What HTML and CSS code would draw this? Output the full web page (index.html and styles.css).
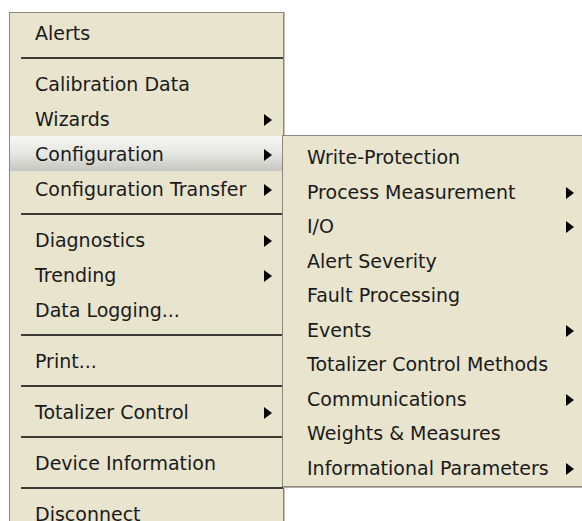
FILE: index.html
```html
<!DOCTYPE html>
<html lang="en">
<head>
  <meta charset="UTF-8" />
  <title>Device Menu</title>
  <link rel="stylesheet" href="styles.css">
</head>
<body>
  <div class="menu main-menu">
    <div class="item">Alerts</div>
    <div class="sep"></div>
    <div class="item">Calibration Data</div>
    <div class="item">Wizards<span class="arrow"></span></div>
    <div class="item active">Configuration<span class="arrow"></span></div>
    <div class="item">Configuration Transfer<span class="arrow"></span></div>
    <div class="sep"></div>
    <div class="item">Diagnostics<span class="arrow"></span></div>
    <div class="item">Trending<span class="arrow"></span></div>
    <div class="item">Data Logging...</div>
    <div class="sep"></div>
    <div class="item">Print...</div>
    <div class="sep"></div>
    <div class="item">Totalizer Control<span class="arrow"></span></div>
    <div class="sep"></div>
    <div class="item">Device Information</div>
    <div class="sep"></div>
    <div class="item">Disconnect</div>
  </div>

  <!-- Configuration submenu -->
  <div class="menu sub-menu">
    <div class="item">Write-Protection</div>
    <div class="item">Process Measurement<span class="arrow"></span></div>
    <div class="item">I/O<span class="arrow"></span></div>
    <div class="item">Alert Severity</div>
    <div class="item">Fault Processing</div>
    <div class="item">Events<span class="arrow"></span></div>
    <div class="item">Totalizer Control Methods</div>
    <div class="item">Communications<span class="arrow"></span></div>
    <div class="item">Weights &amp; Measures</div>
    <div class="item">Informational Parameters<span class="arrow"></span></div>
  </div>
</body>
</html>
```

FILE: styles.css
```css
* {
  box-sizing: border-box;
  margin: 0;
  padding: 0;
}

html, body {
  height: 100%;
  overflow: hidden;
  background: #fff;
  font-family: "DejaVu Sans", sans-serif;
  font-size: 19px;
  color: #1a1a1a;
}

body {
  position: relative;
}

.menu {
  background: #e8e4ce;
  border: 1px solid #8a887e;
}

.main-menu {
  width: 275px;
  margin: 12px 0 0 9px;
  padding-top: 2px;
  box-shadow: 1px 0 0 #c4c3bc;
}

.sub-menu {
  position: absolute;
  top: 135px;
  left: 282px;
  width: 304px;
  padding: 4px 0 1px;
  box-shadow: 1px 1px 0 #b0afa8;
}

.item {
  display: flex;
  align-items: center;
  justify-content: space-between;
  gap: 4px;
  height: 35px;
  padding: 0 11px 0 25px;
  white-space: nowrap;
}

.sub-menu .item {
  height: 34.5px;
  padding: 0 11px 0 24px;
}

.item.active {
  background: linear-gradient(#f6f6f3, #e4e4e0 55%, #c6c6c0);
}

.arrow {
  flex: none;
  width: 0;
  height: 0;
  margin-top: 2px;
  border-left: 8px solid #000;
  border-top: 6px solid transparent;
  border-bottom: 6px solid transparent;
}

.sep {
  height: 16px;
  padding-top: 7px;
  margin-left: 11px;
}

.sep::before {
  content: "";
  display: block;
  height: 2px;
  background: #3c3c3a;
}
```
